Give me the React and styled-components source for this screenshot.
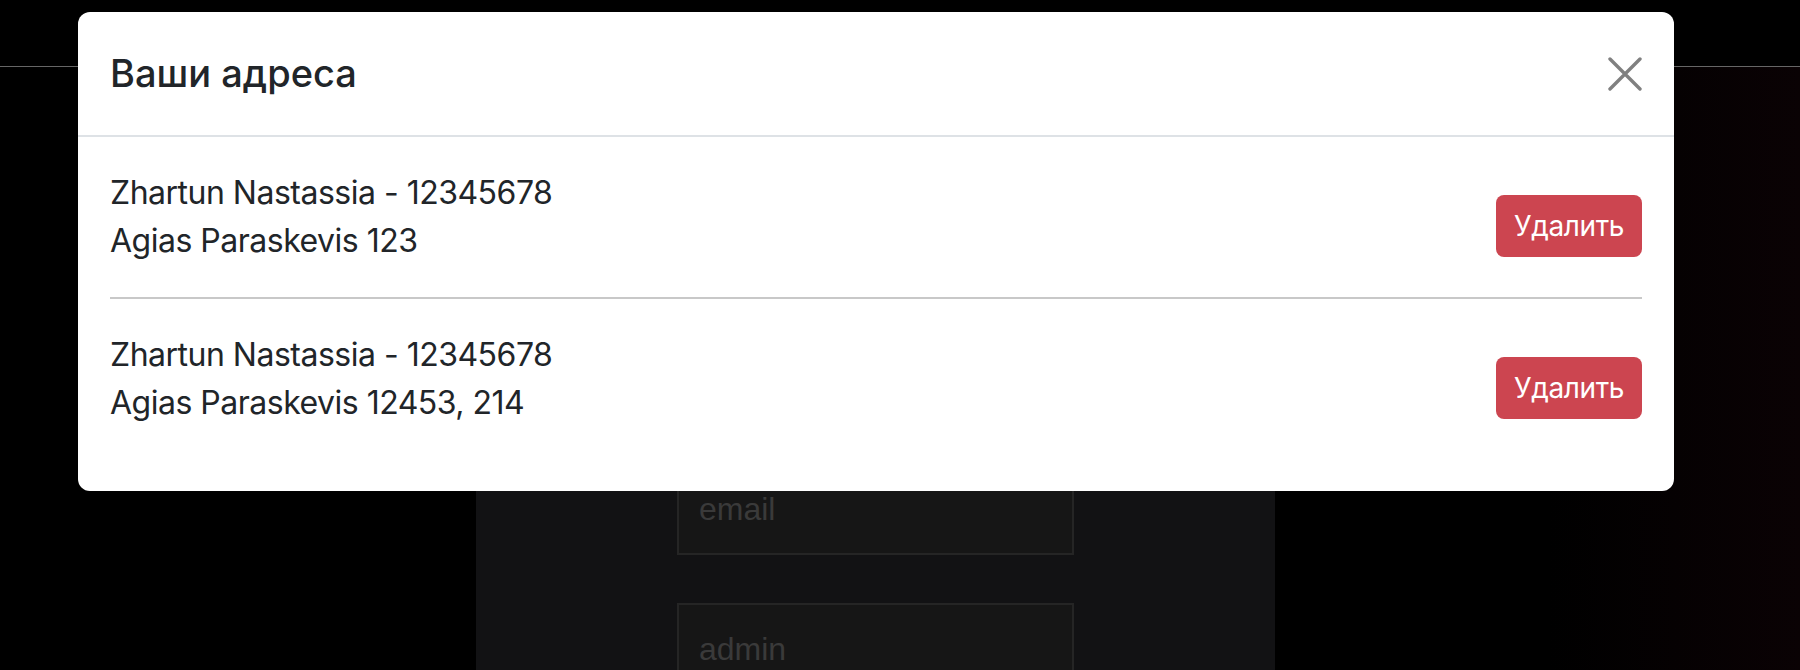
import React from 'react'
import styled, { createGlobalStyle } from "styled-components";

const addresses = [
  { name: "Zhartun Nastassia", phone: "12345678", street: "Agias Paraskevis 123" },
  { name: "Zhartun Nastassia", phone: "12345678", street: "Agias Paraskevis 12453, 214" },
];

const fields = ["name", "phone", "email", "admin"];

const App = () => {
  return (
    <>
      <GlobalStyle />
      <Page>
        <TopBar />
        <Main>
          <Panel>
            {fields.map((f) => (
              <Field key={f} placeholder={f} />
            ))}
          </Panel>
        </Main>

        <Overlay>
          <Dialog>
            <Header>
              <Title>Ваши адреса</Title>
              <CloseButton aria-label="close">
                <svg width="34" height="34" viewBox="0 0 34 34">
                  <path d="M2 2 L32 32 M32 2 L2 32" stroke="#808080" strokeWidth="3.4" strokeLinecap="round" />
                </svg>
              </CloseButton>
            </Header>
            <Body>
              {addresses.map((a, i) => (
                <React.Fragment key={i}>
                  {i > 0 && <Divider />}
                  <Item>
                    <Address>
                      <Line>{a.name} - {a.phone}</Line>
                      <Line>{a.street}</Line>
                    </Address>
                    <DeleteButton>Удалить</DeleteButton>
                  </Item>
                </React.Fragment>
              ))}
            </Body>
          </Dialog>
        </Overlay>
      </Page>
    </>
  )
};

const GlobalStyle = createGlobalStyle`
  body {
    margin: 0;
    background: #000;
    overflow: hidden;
    font-family: Inter, "Liberation Sans", sans-serif;
  }
  * { box-sizing: border-box; }
`;

const Page = styled.div`
  position: relative;
  height: 670px;
  display: flex;
  flex-direction: column;
  overflow: hidden;
`;

const TopBar = styled.div`
  height: 67px;
  flex-shrink: 0;
  border-bottom: 1px solid #666;
  background: #000;
`;

const Main = styled.div`
  flex: 1;
  min-height: 0;
  display: flex;
  justify-content: center;
  padding-right: 49px;
  background: linear-gradient(90deg, #000 0%, #000 86%, #0a0204 100%);
`;

const Panel = styled.div`
  width: 799px;
  flex-shrink: 0;
  background: #121214;
  padding-top: 116px;
  display: flex;
  flex-direction: column;
  align-items: center;
  gap: 48px;
`;

const Field = styled.input`
  width: 397px;
  height: 92px;
  flex-shrink: 0;
  background: #161616;
  border: 2px solid #252525;
  padding: 0 20px;
  font-family: "Liberation Sans", Arial, sans-serif;
  font-size: 32px;
  color: #ccc;
  outline: none;

  &::placeholder {
    color: #3a3a3a;
  }
`;

const Overlay = styled.div`
  position: absolute;
  inset: 0;
  padding: 12px 126px 0 78px;
`;

const Dialog = styled.div`
  background: #fff;
  border-radius: 12px;
  color: #212529;
  overflow: hidden;
`;

const Header = styled.div`
  height: 125px;
  padding: 0 32px;
  display: flex;
  align-items: center;
  justify-content: space-between;
  border-bottom: 2px solid #dee2e6;
`;

const Title = styled.h5`
  margin: 0;
  font-size: 38px;
  font-weight: 500;
  line-height: 1.2;
`;

const CloseButton = styled.button`
  border: 0;
  background: none;
  padding: 0;
  width: 34px;
  height: 34px;
  display: flex;
  cursor: pointer;
`;

const Body = styled.div`
  padding: 32px;
`;

const Item = styled.div`
  display: flex;
  align-items: center;
  justify-content: space-between;
  margin-bottom: 14px;
`;

const Address = styled.div`
  margin-bottom: 18px;
`;

const Line = styled.div`
  font-size: 32px;
  line-height: 48px;
  letter-spacing: -0.5px;
`;

const Divider = styled.hr`
  margin: 0 0 32px;
  border: 0;
  height: 2px;
  background: #c8c8c8;
`;

const DeleteButton = styled.button`
  height: 62px;
  padding: 0 18px;
  border: 0;
  border-radius: 8px;
  background: #cc4550;
  color: #fff;
  font-family: Inter, "Liberation Sans", sans-serif;
  font-size: 28px;
  letter-spacing: -0.4px;
  cursor: pointer;
`;

export default App
